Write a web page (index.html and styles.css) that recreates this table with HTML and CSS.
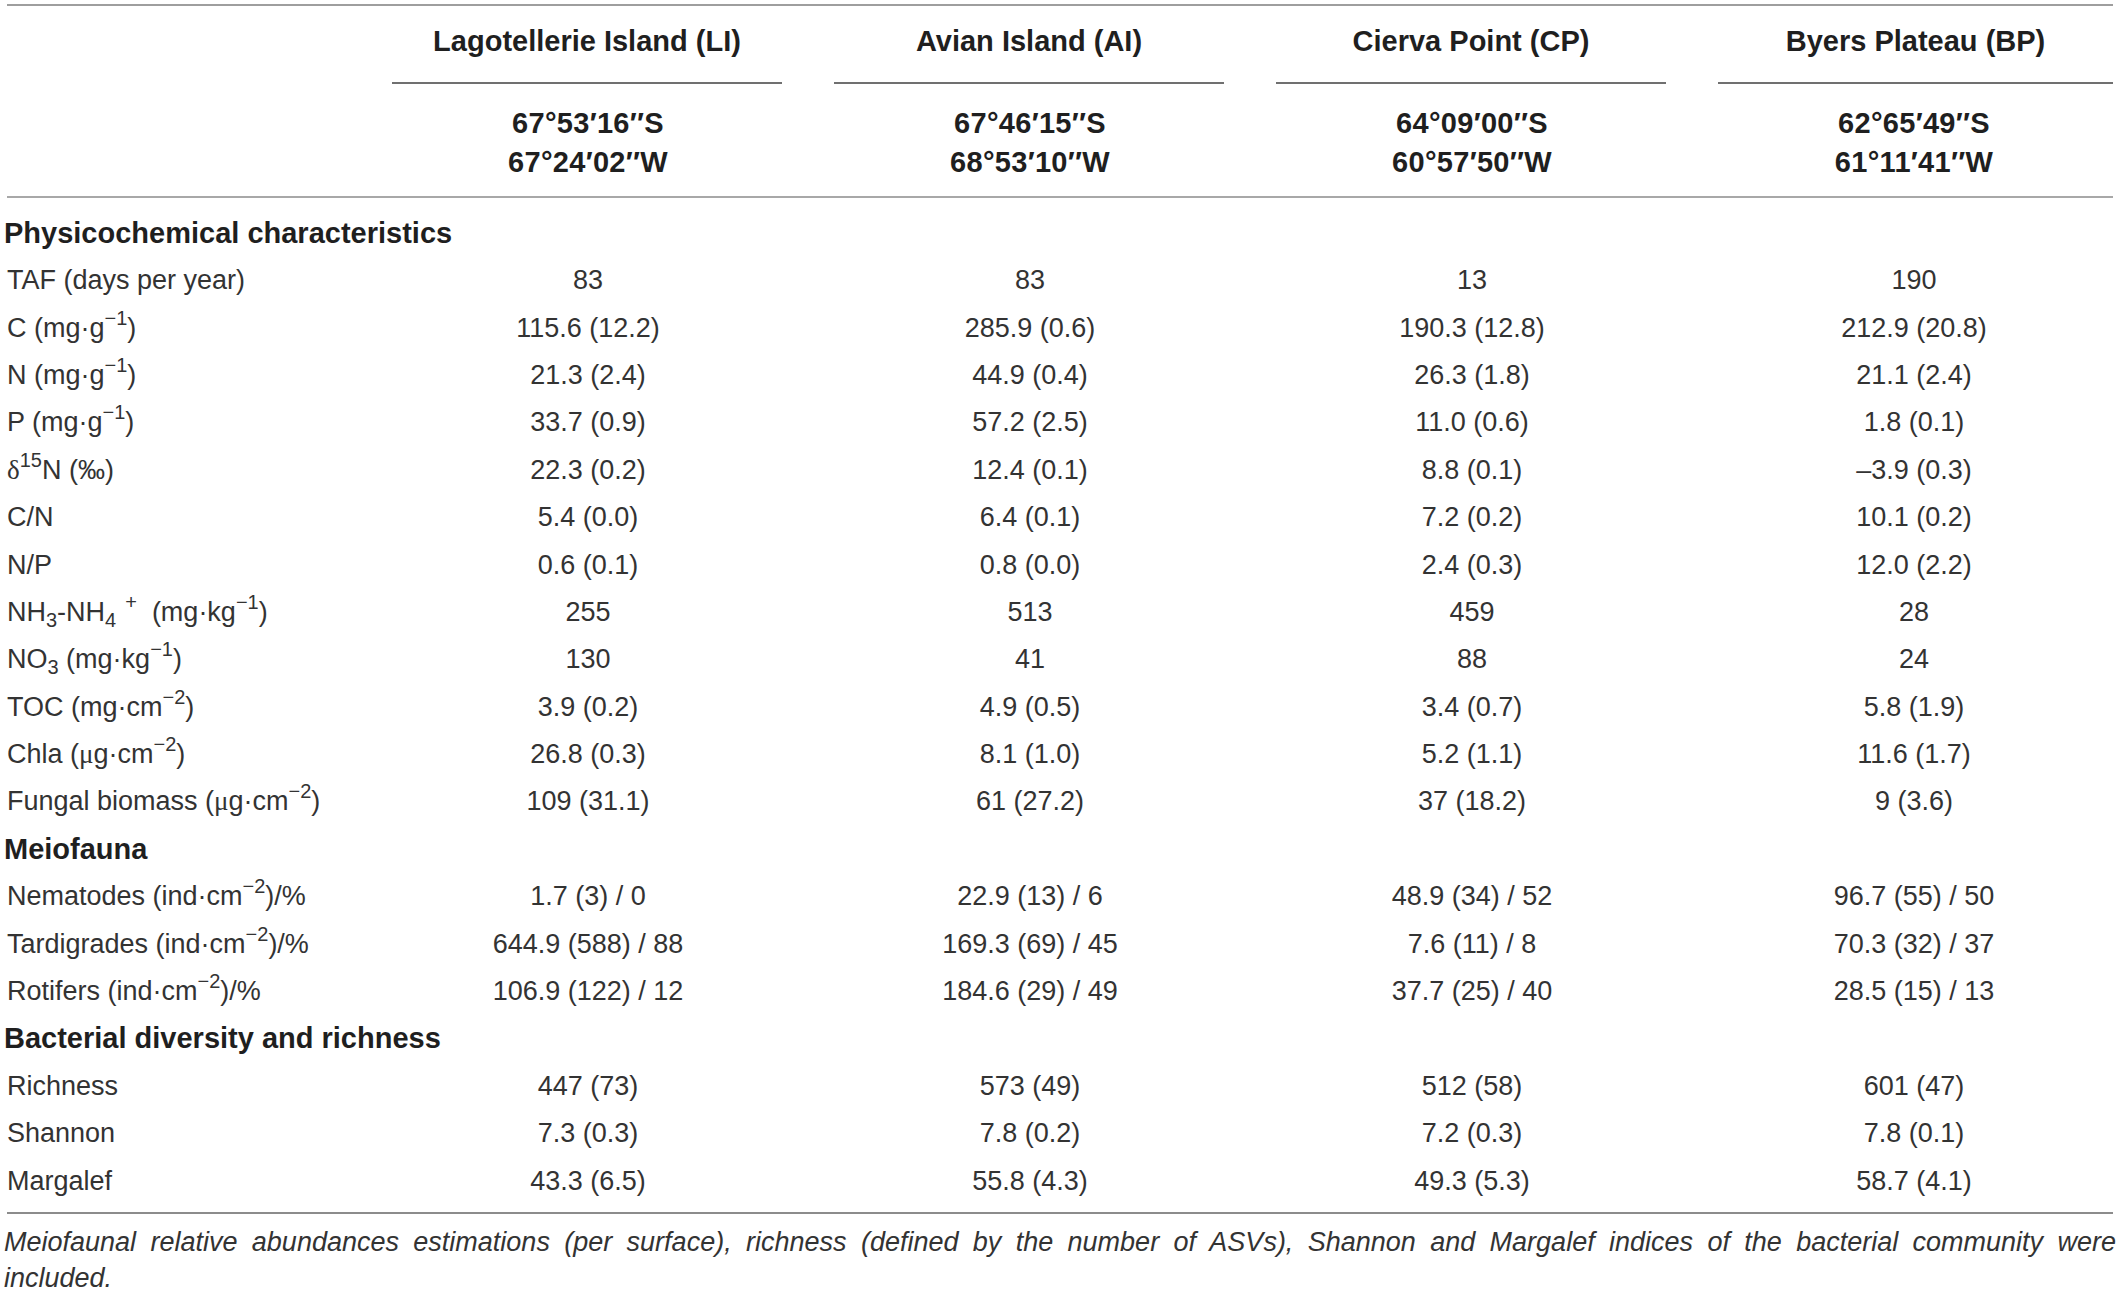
FILE: index.html
```html
<!DOCTYPE html>
<html lang="en">
<head>
<meta charset="utf-8">
<title>Table</title>
<link rel="stylesheet" href="styles.css">
</head>
<body>
<div class="table">
  <div class="rule rule-top"></div>
  <div class="grid head">
    <div class="stub"></div>
    <div class="colhead"><div class="site">Lagotellerie Island (LI)</div><div class="coords">67°53′16′′S<br>67°24′02′′W</div></div>
    <div class="colhead"><div class="site">Avian Island (AI)</div><div class="coords">67°46′15′′S<br>68°53′10′′W</div></div>
    <div class="colhead"><div class="site">Cierva Point (CP)</div><div class="coords">64°09′00′′S<br>60°57′50′′W</div></div>
    <div class="colhead last"><div class="site">Byers Plateau (BP)</div><div class="coords">62°65′49′′S<br>61°11′41′′W</div></div>
  </div>
  <div class="rule rule-mid"></div>
  <div class="body">
    <div class="section">Physicochemical characteristics</div>
    <div class="grid row"><div class="label">TAF (days per year)</div><div>83</div><div>83</div><div>13</div><div>190</div></div>
    <div class="grid row"><div class="label">C (mg·g<sup>−1</sup>)</div><div>115.6 (12.2)</div><div>285.9 (0.6)</div><div>190.3 (12.8)</div><div>212.9 (20.8)</div></div>
    <div class="grid row"><div class="label">N (mg·g<sup>−1</sup>)</div><div>21.3 (2.4)</div><div>44.9 (0.4)</div><div>26.3 (1.8)</div><div>21.1 (2.4)</div></div>
    <div class="grid row"><div class="label">P (mg·g<sup>−1</sup>)</div><div>33.7 (0.9)</div><div>57.2 (2.5)</div><div>11.0 (0.6)</div><div>1.8 (0.1)</div></div>
    <div class="grid row"><div class="label"><span class="greek">δ</span><sup>15</sup>N (‰)</div><div>22.3 (0.2)</div><div>12.4 (0.1)</div><div>8.8 (0.1)</div><div>–3.9 (0.3)</div></div>
    <div class="grid row"><div class="label">C/N</div><div>5.4 (0.0)</div><div>6.4 (0.1)</div><div>7.2 (0.2)</div><div>10.1 (0.2)</div></div>
    <div class="grid row"><div class="label">N/P</div><div>0.6 (0.1)</div><div>0.8 (0.0)</div><div>2.4 (0.3)</div><div>12.0 (2.2)</div></div>
    <div class="grid row"><div class="label">NH<sub>3</sub>-NH<sub>4</sub><sup class="plus">+</sup>&nbsp; (mg·kg<sup>−1</sup>)</div><div>255</div><div>513</div><div>459</div><div>28</div></div>
    <div class="grid row"><div class="label">NO<sub>3</sub> (mg·kg<sup>−1</sup>)</div><div>130</div><div>41</div><div>88</div><div>24</div></div>
    <div class="grid row"><div class="label">TOC (mg·cm<sup>−2</sup>)</div><div>3.9 (0.2)</div><div>4.9 (0.5)</div><div>3.4 (0.7)</div><div>5.8 (1.9)</div></div>
    <div class="grid row"><div class="label">Chla (<span class="greek">μ</span>g·cm<sup>−2</sup>)</div><div>26.8 (0.3)</div><div>8.1 (1.0)</div><div>5.2 (1.1)</div><div>11.6 (1.7)</div></div>
    <div class="grid row"><div class="label">Fungal biomass (<span class="greek">μ</span>g·cm<sup>−2</sup>)</div><div>109 (31.1)</div><div>61 (27.2)</div><div>37 (18.2)</div><div>9 (3.6)</div></div>
    <div class="section">Meiofauna</div>
    <div class="grid row"><div class="label">Nematodes (ind·cm<sup>−2</sup>)/%</div><div>1.7 (3) / 0</div><div>22.9 (13) / 6</div><div>48.9 (34) / 52</div><div>96.7 (55) / 50</div></div>
    <div class="grid row"><div class="label">Tardigrades (ind·cm<sup>−2</sup>)/%</div><div>644.9 (588) / 88</div><div>169.3 (69) / 45</div><div>7.6 (11) / 8</div><div>70.3 (32) / 37</div></div>
    <div class="grid row"><div class="label">Rotifers (ind·cm<sup>−2</sup>)/%</div><div>106.9 (122) / 12</div><div>184.6 (29) / 49</div><div>37.7 (25) / 40</div><div>28.5 (15) / 13</div></div>
    <div class="section">Bacterial diversity and richness</div>
    <div class="grid row"><div class="label">Richness</div><div>447 (73)</div><div>573 (49)</div><div>512 (58)</div><div>601 (47)</div></div>
    <div class="grid row"><div class="label">Shannon</div><div>7.3 (0.3)</div><div>7.8 (0.2)</div><div>7.2 (0.3)</div><div>7.8 (0.1)</div></div>
    <div class="grid row"><div class="label">Margalef</div><div>43.3 (6.5)</div><div>55.8 (4.3)</div><div>49.3 (5.3)</div><div>58.7 (4.1)</div></div>
  </div>
  <div class="rule rule-bottom"></div>
  <p class="caption"><span class="cap1">Meiofaunal relative abundances estimations (per surface), richness (defined by the number of ASVs), Shannon and Margalef indices of the bacterial community were</span><span class="cap2">included.</span></p>
</div>
</body>
</html>
```

FILE: styles.css
```css
html, body {
  margin: 0;
  padding: 0;
  background: #ffffff;
}

body {
  width: 2119px;
  height: 1296px;
  overflow: hidden;
  font-family: "Liberation Sans", Arial, Helvetica, sans-serif;
  color: #333333;
}

.table {
  width: 2119px;
  padding-top: 4px;
}

.rule {
  margin-left: 7px;
  width: 2106px;
  height: 2px;
}

.rule-top { background: #9e9e9e; }
.rule-mid { background: #a8a8a8; }
.rule-bottom { background: #8c8c8c; }

.grid {
  display: grid;
  grid-template-columns: 367px repeat(4, 442px);
}

.head {
  font-weight: bold;
  font-size: 29px;
  color: #1f1f1f;
  text-align: center;
}

.site {
  margin: 0 27px 0 25px;
  padding: 16px 0 22px;
  line-height: 38px;
  border-bottom: 2px solid #707070;
  white-space: nowrap;
}

.colhead.last .site {
  margin: 0 22px 0 25px;
}

.coords {
  padding: 19.5px 0 14.5px;
  line-height: 39px;
  letter-spacing: 0.3px;
}

.body {
  padding: 11.8px 0 6.8px;
}

.section {
  height: 47.4px;
  line-height: 47.4px;
  padding-left: 4px;
  font-size: 29px;
  font-weight: bold;
  color: #1f1f1f;
}

.row {
  height: 47.4px;
  line-height: 47.4px;
  font-size: 27px;
  text-align: center;
  white-space: nowrap;
}

.row .label {
  text-align: left;
  padding-left: 7px;
}

sup, sub {
  font-size: 0.74em;
  line-height: 0;
}

sup {
  vertical-align: 0.62em;
}

sub {
  vertical-align: -0.32em;
}

sup.plus {
  margin-left: 0.45em;
}

.greek {
  font-family: "Liberation Serif", "Times New Roman", serif;
}

.caption {
  margin: 10px 3px 0 4px;
  font-size: 27px;
  font-style: italic;
  line-height: 36px;
  color: #333333;
}

.cap1 {
  display: block;
  text-align: justify;
  text-align-last: justify;
}

.cap2 {
  display: block;
}
```
